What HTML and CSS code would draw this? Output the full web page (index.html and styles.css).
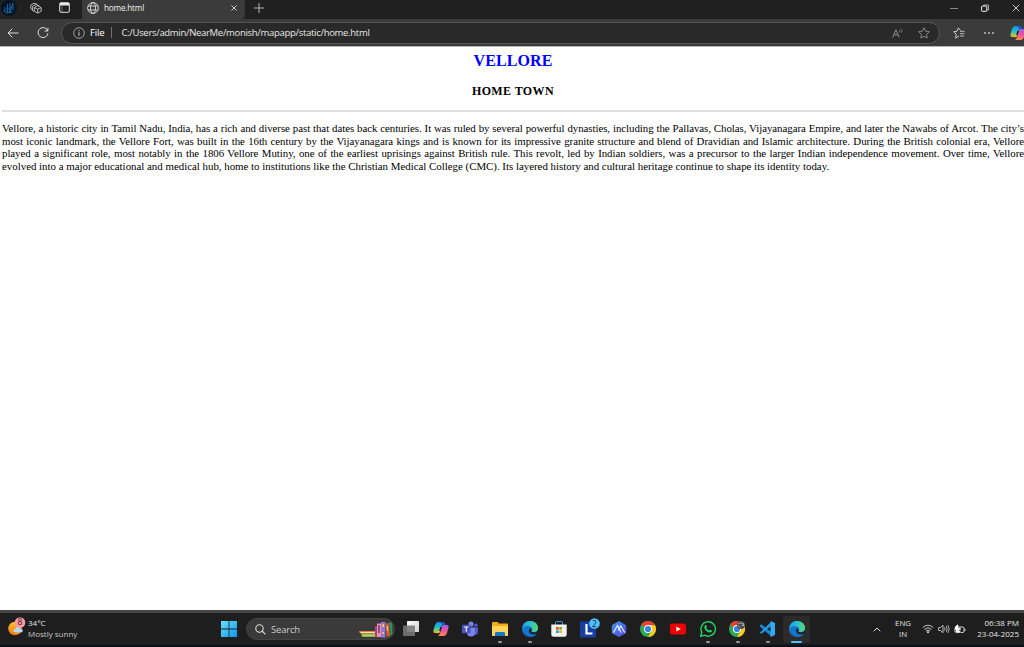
FILE: index.html
```html
<!DOCTYPE html>
<html lang="en">
<head>
<meta charset="utf-8">
<title>home.html</title>
<link rel="stylesheet" href="styles.css">
</head>
<body>
<svg class="defs" width="0" height="0" aria-hidden="true">
  <defs>
    <linearGradient id="gCopL" x1="0" y1="0" x2="0" y2="1"><stop offset="0" stop-color="#168be8"/><stop offset=".45" stop-color="#1fc0c8"/><stop offset="1" stop-color="#f2c21b"/></linearGradient>
    <linearGradient id="gCopR" x1="0" y1="0" x2="0" y2="1"><stop offset="0" stop-color="#9a60ee"/><stop offset=".5" stop-color="#ee4fa0"/><stop offset="1" stop-color="#ff8a4c"/></linearGradient>
    <linearGradient id="gEdge" x1="0" y1="0" x2="1" y2="0"><stop offset="0" stop-color="#1f9de4"/><stop offset=".55" stop-color="#2cc3cf"/><stop offset="1" stop-color="#5bdc61"/></linearGradient>
    <linearGradient id="gEdgeB" x1="0" y1="0" x2="1" y2="1"><stop offset="0" stop-color="#1a8fe0"/><stop offset="1" stop-color="#0a4fa5"/></linearGradient>
    <linearGradient id="gWin" x1="0" y1="0" x2="1" y2="1"><stop offset="0" stop-color="#6be0ff"/><stop offset="1" stop-color="#0f95ea"/></linearGradient>
    <linearGradient id="gSun" x1="0" y1="0" x2="0" y2="1"><stop offset="0" stop-color="#ffc12e"/><stop offset="1" stop-color="#f0780c"/></linearGradient>
    <linearGradient id="gHex" x1="0" y1="0" x2="1" y2="1"><stop offset="0" stop-color="#3c9af0"/><stop offset="1" stop-color="#5b41d6"/></linearGradient>
    <linearGradient id="gTask" x1="0" y1="0" x2="1" y2="1"><stop offset="0" stop-color="#fff"/><stop offset="1" stop-color="#cfcfcf"/></linearGradient>
    <symbol id="copilot" viewBox="0 0 16 16">
      <path d="M5 1h6Q10 1 9 4L7 11Q6 13 4 12H2Q0 12 .5 9L2 4Q3 1 5 1Z" fill="url(#gCopL)"/>
      <path d="M11 15H5Q6 15 7 12L9 5Q10 3 12 4h2Q16 4 15.500 7L14 12Q13 15 11 15Z" fill="url(#gCopR)"/>
      <path d="M6 1h5Q12 1 12.500 4H11Q9.500 4 9 5L8.500 7 9 3Q8 1 6 1Z" fill="#1756c9"/>
      <path d="M7.300 6h1.500L7.700 10H6.200Z" fill="#1e1e1e"/>
    </symbol>
    <symbol id="edge" viewBox="0 0 16 16">
      <circle cx="8" cy="8" r="8" fill="url(#gEdgeB)"/>
      <path d="M.1 7C1 2.500 4.300 0 8.200 0 12.800 0 16 3.200 16 6.900 16 9.500 14 11 12 11 10 11 9 10.300 9.500 9.500 10.300 8.300 10 5.800 7 5.200 4 4.600 1.300 5.400.1 7Z" fill="url(#gEdge)"/>
      <path d="M6.300 6.800C4.800 9.300 6 13 9.500 14 12 14.600 14 13.500 15 12 13 17 6.500 16.800 4 13 2.800 10.800 3.500 7.800 6.300 6.800Z" fill="#1479d0"/>
      <path d="M9.500 9.500C8.700 10.500 10 11.500 12 11.500 13.600 11.500 15 10.800 15.600 9.500L16 11 15 12.600C12 14 7.500 13 7 9.700 7 8.500 8 7.500 9.500 7.600 10 8.200 9.800 9 9.500 9.500Z" fill="#1e1e1e"/>
    </symbol>
    <symbol id="chrome" viewBox="0 0 16 16">
      <circle cx="8" cy="8" r="8" fill="#2da94f"/>
      <path d="M8 8 1.070 4A8 8 0 0 1 14.930 4Z" fill="#e8402f"/>
      <path d="M8 4h6.930A8 8 0 0 1 8 16L11.500 10Z" fill="#fdc820"/>
      <circle cx="8" cy="8" r="4" fill="#fff"/><circle cx="8" cy="8" r="3.100" fill="#397fea"/>
    </symbol>
  </defs>
</svg>

<div class="screen">
  <header class="tabstrip">
    <svg class="avatar" viewBox="0 0 16 16"><circle cx="8" cy="8" r="8" fill="#071426"/><path d="M4 7v5M6.500 4v9M9 6v6l3-9v7M2.500 10l3 3 6-1" fill="none" stroke="#12688f" stroke-width="1"/><path d="M9 12V3M5 9h5" stroke="#2b489a" fill="none"/></svg>
    <svg class="workspaces" viewBox="0 0 12 12"><path d="M2.700 8 .8 6.600V3.100L4 1.200 7 2.300M4 9.500 2.600 8.600V4.300L6 2.400 9.300 3.800M4.300 5.600 7.700 3.700 11.200 5.600V9.100L7.700 11.100 4.300 9.100ZM4.500 5.700 7.700 7.200 11 5.700M7.700 7.200V11" fill="none" stroke="#c8c8c8" stroke-width=".9"/></svg>
    <svg class="tabactions" viewBox="0 0 11 11"><rect x=".7" y=".7" width="9.600" height="9.600" rx="1.200" fill="none" stroke="#e0e0e0"/><path d="M1 1h9v2.500H1Z" fill="#e8e8e8"/><path d="M3 3v7" stroke="#8b8b8b" stroke-width=".7"/></svg>
    <div class="tab">
      <svg class="globe" viewBox="0 0 12 12"><g fill="none" stroke="#ddd" stroke-width=".9"><circle cx="6" cy="6" r="5.400"/><ellipse cx="6" cy="6" rx="2.500" ry="5.400"/><path d="M1 4h10M1 8h10"/></g></svg>
      <span class="tab-title">home.html</span>
      <svg class="tab-close" viewBox="0 0 6 6"><path d="m.4.4 5.200 5.200M5.600.4.4 5.600" stroke="#ddd" stroke-width=".9"/></svg>
    </div>
    <svg class="newtab" viewBox="0 0 10 10"><path d="M5 0v10M0 5h10" stroke="#c4c4c4" stroke-width=".9"/></svg>
    <div class="window-controls">
      <svg width="8" height="8"><path d="M0 4.500h8" stroke="#868686"/></svg>
      <svg width="8" height="8"><path d="M2.500 1.500V1h5v5H6" fill="none" stroke="#aaa"/><rect x=".6" y="2.100" width="5.200" height="5.200" rx=".6" fill="none" stroke="#eee"/></svg>
      <svg width="8" height="8"><path d="m.7.700 6.600 6.600M7.300.7.700 7.300" stroke="#ccc"/></svg>
    </div>
  </header>

  <nav class="toolbar">
    <svg class="back" viewBox="0 0 12 10"><path d="M11.500 5H1M5.300.7 1 5l4.300 4.300" fill="none" stroke="#ddd"/></svg>
    <svg class="reload" viewBox="0 0 12 12"><path d="M10.800 4A5 5 0 1 0 11 6.300M10.900.8V4H7.600" fill="none" stroke="#ddd"/></svg>
    <div class="address">
      <svg class="info" viewBox="0 0 12 12"><circle cx="6" cy="6" r="5.300" fill="none" stroke="#bbb" stroke-width=".8"/><path d="M6 5.200v3.600M6 3v1.200" stroke="#ccc"/></svg>
      <span class="scheme">File</span>
      <span class="divider"></span>
      <span class="url">C:/Users/admin/NearMe/monish/mapapp/static/home.html</span>
      <svg class="read" viewBox="0 0 12 10"><path d="M.7 9.500 3.900 1.800 7.200 9.500M1.900 6.800h4.100" fill="none" stroke="#999" stroke-width=".9"/><path d="M7.200 2.200q1 1 .2 2.200M8.800.8q2 2 .4 4" fill="none" stroke="#888" stroke-width=".8"/></svg>
      <svg class="star" viewBox="0 0 12 12"><path d="m6 .8 1.600 3.400 3.700.5-2.700 2.600.6 3.700L6 9.300 2.800 11l.6-3.700L.7 4.700l3.700-.5Z" fill="none" stroke="#909090" stroke-width=".9"/></svg>
    </div>
    <svg class="favorites" viewBox="0 0 12 12"><path d="M7.500 3.500 5.300.9 4 4.200.7 4.700l2.500 2.400L2.600 11 6 9" fill="none" stroke="#ccc"/><path d="M7 4.300h4.500M7 6.700h4.500M7 9h4" stroke="#bbb"/></svg>
    <svg class="more" viewBox="0 0 10 4"><g fill="#ccc"><circle cx="1" cy="2" r=".9"/><circle cx="5" cy="2" r=".9"/><circle cx="9" cy="2" r=".9"/></g></svg>
    <svg class="sidebar-copilot"><use href="#copilot"/></svg>
  </nav>

  <main class="page">
    <h1 class="city">VELLORE</h1>
    <h2 class="subtitle">HOME TOWN</h2>
    <hr class="rule">
    <p class="story">
      <span class="line">Vellore, a historic city in Tamil Nadu, India, has a rich and diverse past that dates back centuries. It was ruled by several powerful dynasties, including the Pallavas, Cholas, Vijayanagara Empire, and later the Nawabs of Arcot. The city’s</span>
      <span class="line">most iconic landmark, the Vellore Fort, was built in the 16th century by the Vijayanagara kings and is known for its impressive granite structure and blend of Dravidian and Islamic architecture. During the British colonial era, Vellore</span>
      <span class="line">played a significant role, most notably in the 1806 Vellore Mutiny, one of the earliest uprisings against British rule. This revolt, led by Indian soldiers, was a precursor to the larger Indian independence movement. Over time, Vellore</span>
      <span class="line last">evolved into a major educational and medical hub, home to institutions like the Christian Medical College (CMC). Its layered history and cultural heritage continue to shape its identity today.</span>
    </p>
  </main>

  <footer class="taskbar">
    <div class="weather">
      <svg class="weather-icon" viewBox="0 0 18 20"><circle cx="7" cy="11.500" r="6.800" fill="url(#gSun)"/><path d="M7.500 15.500q-2.500 0-2.300-2 .3-1.400 2-1.300.8-2.500 3-2 1.800.2 2.200 1.800 2.300-.3 2.400 1.600 0 1.900-2 1.900Z" fill="#b7d7f8"/><circle cx="12" cy="5.500" r="5.300" fill="#ff99a4"/><text class="badge-text" x="12" y="8.400">8</text></svg>
      <div class="weather-text"><span class="temp">34°C</span><span class="cond">Mostly sunny</span></div>
    </div>
    <svg class="start" viewBox="0 0 16 16"><path d="M0 0h7.600v7.600H0ZM8.400 0H16v7.600H8.400ZM0 8.400h7.600V16H0ZM8.400 8.400H16V16H8.400Z" fill="url(#gWin)"/></svg>
    <div class="search">
      <svg class="lens" viewBox="0 0 11 11"><circle cx="4.500" cy="4.500" r="3.700" fill="none" stroke="#ddd" stroke-width="1.100"/><path d="m7.200 7.200 3.200 3.200" stroke="#ddd" stroke-width="1.200"/></svg>
      <span class="search-label">Search</span>
      <svg class="books" viewBox="0 0 34 17"><path d="M0 10h16v2.500H2Q0 12 0 10Z" fill="#e8785b"/><path d="M1 11h15v1.300H2Z" fill="#f7dfa4"/><path d="M2 12.500h15V16H3Z" fill="#87ac3a"/><path d="M3 13.700h14v1H4Z" fill="#d9dc86"/><path d="M16 5h2v11h-2Z" fill="#a9427b"/><path d="M18 2.500h4V16h-4Z" fill="#f68cae"/><path d="M19.200 4h1.600v8h-1.600Z" fill="#7d3b77"/><path d="M22 1h4.300v15.500H22Z" fill="#9178df"/><path d="M23.200 3h1.800v3h-1.800ZM23.200 11H25v2h-1.800Z" fill="#f5b66a"/><path d="m26.300 2.500 3.400-.6L31 15l-3.500 1Z" fill="#d05b34"/><path d="m27.500 5 1.200-.2.700 5-1.200.2Z" fill="#f5c777"/><path d="M30 1.500q3-1 3.400 2v10l-2 1Z" fill="#2e8d61"/></svg>
    </div>
    <div class="apps">
      <span class="app"><svg viewBox="0 0 16 16"><rect x="4" y="0" width="12" height="11" rx=".8" fill="url(#gTask)"/><rect x="0" y="4.500" width="12" height="10.500" rx=".8" fill="#777" fill-opacity=".88"/></svg></span>
      <span class="app"><svg><use href="#copilot"/></svg></span>
      <span class="app"><svg viewBox="0 0 16 16"><circle cx="9" cy="3" r="2.600" fill="#7b83eb"/><circle cx="14" cy="4.200" r="1.700" fill="#5059c9"/><path d="M11 6.500h5v4.500q-.3 3-3 3h-2Z" fill="#5059c9"/><path d="M5 6.500h8V12q-.5 3.500-4 3.500T5 12Z" fill="#7b83eb"/><rect x="0" y="3.800" width="8.500" height="8.500" rx=".8" fill="#4b53bc"/><path d="M2.200 6h4.200M4.300 6v4.800" stroke="#fff" stroke-width="1.100"/></svg></span>
      <span class="app running"><svg viewBox="0 0 16 16"><path d="M0 2q0-1 1-1h4.500L7 2.600h8q1 0 1 1V14q0 1-1 1H1q-1 0-1-1Z" fill="#f3ac16"/><path d="M0 5h16v9q0 1-1 1H1q-1 0-1-1Z" fill="#ffd45a"/><path d="M3 15v-2.800q0-1.200 1.200-1.200h7.600q1.200 0 1.200 1.200V15Z" fill="#1477c6"/></svg></span>
      <span class="app running"><svg><use href="#edge"/></svg></span>
      <span class="app"><svg viewBox="0 0 16 16"><path d="M4.500 4V1.600q0-1 1-1h5q1 0 1 1V4" fill="none" stroke="#35a9e8"/><path d="M.3 3.400h15.400v10q0 2.400-2.200 2.400h-11Q.3 15.800.3 13.400Z" fill="#f2f2f2"/><path d="M5 6h2.700v2.700H5Z" fill="#ef5428"/><path d="M8.300 6H11v2.700H8.300Z" fill="#79b621"/><path d="M5 9.300h2.700V12H5Z" fill="#239fe6"/><path d="M8.300 9.300H11V12H8.300Z" fill="#f8b60c"/></svg></span>
      <span class="app"><svg class="l-app" viewBox="0 0 20 20"><path d="M0 3.500h16v16H0Z" fill="#173f9f"/><path d="M6.500 6v9.500h6" fill="none" stroke="#fff" stroke-width="2.200"/><circle cx="14.500" cy="5.500" r="5.300" fill="#4cc2ff"/><text class="badge-text" x="14.500" y="8.500">2</text></svg></span>
      <span class="app"><svg viewBox="0 0 16 16"><path d="m8 0 6.500 3.700q.7.400.7 1.200v6.300q0 .8-.7 1.200L8 16l-6.500-3.600q-.7-.4-.7-1.200V4.900q0-.8.7-1.200Z" fill="url(#gHex)"/><path d="m2.500 11.500 4-7 3.700 7M7 9.500 9.700 5l4 6.500" fill="none" stroke="#e4efff" stroke-width="1.200"/></svg></span>
      <span class="app"><svg><use href="#chrome"/></svg></span>
      <span class="app"><svg viewBox="0 0 16 16"><rect x="0" y="2.500" width="16" height="11" rx="2" fill="#f00000"/><path d="m6.300 5.500 4.600 2.500-4.600 2.500Z" fill="#fff"/></svg></span>
      <span class="app running"><svg viewBox="0 0 16 16"><path d="M.7 15.300 1.800 11.300A7.200 7.200 0 1 1 4.600 14.200Z" fill="#1e1e1e" stroke="#25d366" stroke-width="1.400"/><path d="M5.200 4.200q.8-.5 1.200.4l.5 1.200q-.2.800-.7 1.100 1.100 2 3 2.700l.9-.9 1.900.9q.2 1.500-1.600 1.900-2.500.3-4.800-2.300Q3.300 6 5.200 4.200Z" fill="#25d366"/></svg></span>
      <span class="app running"><svg viewBox="0 0 16 16"><use href="#chrome" width="16" height="16"/><circle cx="12" cy="4" r="4" fill="#4b4b4b"/><path d="M9 3q3-2.300 6 0l-2 1.500h2.500M9 4.500l2 2" fill="none" stroke="#b7b7b7" stroke-width=".9"/></svg></span>
      <span class="app running"><svg viewBox="0 0 16 16"><path d="m1 4.300 1.500-1L12 11v4L1 5.700Z" fill="#1688d6"/><path d="M1 11.500 12 1v4L2.500 12.700 1 12Z" fill="#2297e8"/><path d="m11.500 0 4.500 2v12l-4.500 2Z" fill="#35a9f3"/></svg></span>
      <span class="app active"><svg><use href="#edge"/></svg></span>
    </div>
    <div class="tray">
      <svg class="chevron" viewBox="0 0 8 5"><path d="M.7 4.300 4 1l3.300 3.300" fill="none" stroke="#ddd"/></svg>
      <div class="language"><span>ENG</span><span>IN</span></div>
      <svg class="wifi" viewBox="0 0 12 10"><g fill="none" stroke="#d4d4d4" stroke-width=".9"><path d="M.7 3.500Q6-1 11.300 3.500M2.400 5.300q3.600-3 7.200 0M4 7q2-1.600 4 0"/></g><circle cx="6" cy="8.300" r="1" fill="#e4e4e4"/></svg>
      <svg class="volume" viewBox="0 0 12 10"><path d="M.6 3.500h1.900L5 1.300v7.400L2.500 6.500H.6Z" fill="none" stroke="#ccc" stroke-width=".9"/><path d="M6.500 3.300q1.200 1.700 0 3.400M8.200 2q2 3 0 6M9.900 1q2.700 4 0 8" fill="none" stroke="#ccc" stroke-width=".8"/></svg>
      <svg class="battery" viewBox="0 0 12 10"><rect x="1" y="3" width="9" height="5.500" rx="1.300" fill="none" stroke="#ddd"/><path d="M2 4h5v4H2Z" fill="#eee"/><path d="M11 4.800v2" stroke="#ddd"/><path d="M3.500.2q-3 2.300-2.700 5 2 .8 3.600-.8Q5.300 2.500 3.500.2Z" fill="#fff"/><path d="m7.500 4-2 2.500H7L6 9" fill="none" stroke="#222" stroke-width=".7"/></svg>
      <div class="clock"><span>06:38 PM</span><span>23-04-2025</span></div>
    </div>
  </footer>
</div>
</body>
</html>
```

FILE: styles.css
```css
* { box-sizing: border-box; }
body { margin: 0; background: #fff; overflow: hidden; font-family: "Open Sans", "Noto Sans", sans-serif; }
.defs { position: absolute; }
svg { display: block; flex: none; }
.screen { width: 1024px; height: 647px; display: grid; grid-template-rows: 19px 28px 563px 37px; }

.tabstrip { display: flex; align-items: center; background: #202020; padding-bottom: 4px; overflow: hidden; }
.avatar { width: 16px; height: 16px; margin-left: 1px; }
.workspaces { width: 12px; height: 12px; margin-left: 13px; }
.tabactions { width: 11px; height: 11px; margin-left: 17px; }
.tab { align-self: flex-start; height: 19px; width: 163px; margin-left: 12px; padding: 0 8px 4px 5px; display: flex; align-items: center; flex: none; background: #3b3b3b; border-radius: 0 0 4px 0; }
.globe { width: 12px; height: 12px; }
.tab-title { margin: 0 0 0 5px; font-size: 8.2px; line-height: 12px; letter-spacing: -.2px; color: #f0f0f0; }
.tab-close { width: 6px; height: 6px; margin-left: auto; }
.newtab { width: 10px; height: 10px; margin-left: 9px; }
.window-controls { display: flex; gap: 23px; margin-left: auto; margin-right: 4px; }

.toolbar { display: flex; align-items: center; background: #3b3b3b; border-bottom: 1px solid #b4b4b4; overflow: hidden; }
.back { width: 12px; height: 10px; margin-left: 7px; }
.reload { width: 12px; height: 12px; margin-left: 18px; }
.address { width: 879px; height: 22px; margin-left: 12px; padding: 0 9px 0 11px; display: flex; align-items: center; flex: none; background: #292929; border: 1px solid #555; border-radius: 11px; font-size: 9.5px; line-height: 14px; color: #e7e7e7; }
.info { width: 12px; height: 12px; }
.scheme { margin-left: 5px; letter-spacing: -.15px; color: #fff; }
.divider { width: 1px; height: 11px; margin: 0 9px 0 7px; background: #707070; }
.url { white-space: nowrap; letter-spacing: -.3px; }
.read { width: 12px; height: 10px; margin-left: auto; }
.star { width: 12px; height: 12px; margin-left: 14px; }
.favorites { width: 12px; height: 12px; margin-left: 13px; }
.more { width: 10px; height: 4px; margin-left: 19px; }
.sidebar-copilot { width: 16px; height: 16px; margin-left: 16px; }

.page { background: #fff; padding: 5px 0 0 2px; font-family: "Liberation Serif", serif; color: #000; }
.city { margin: 0; font-size: 16px; line-height: 18px; letter-spacing: .1px; text-align: center; color: #00f; }
.subtitle { margin: 14px 0 0; font-size: 12px; line-height: 14px; letter-spacing: .4px; text-align: center; }
.rule { height: 2px; margin: 12px 0 0; border: 0; background: #e0e0e0; }
.story { margin: 10px 0 0; font-size: 10.86px; line-height: 12.6px; }
.line { display: block; white-space: nowrap; text-align: justify; text-align-last: justify; letter-spacing: -.05px; }
.last { text-align-last: left; letter-spacing: 0; }

.taskbar { display: flex; align-items: center; background: #1e1e1e; border-top: 3px solid #454545; border-bottom: 2px solid #0b1016; color: #e4e4e4; font-size: 8px; line-height: 11px; }
.weather { width: 221px; display: flex; align-items: center; flex: none; padding-left: 8px; }
.weather-icon { width: 18px; height: 20px; margin-top: -4px; }
.badge-text { font: 8.5px "Open Sans", sans-serif; text-anchor: middle; fill: #29252b; }
.weather-text { display: grid; margin: -3px 0 0 2px; }
.cond { color: #c6c6c6; }
.start { width: 16px; height: 16px; }
.search { width: 149px; height: 22px; margin-left: 9px; padding: 0 1px 0 8px; display: flex; align-items: center; flex: none; border-radius: 11px; background: #3a3a3a; border: 1px solid #444; }
.lens { width: 11px; height: 11px; }
.search-label { margin-left: 5px; font-size: 9.5px; letter-spacing: -.2px; color: #ccc; }
.books { width: 34px; height: 17px; margin: 1px 0 0 auto; }
.apps { display: grid; grid-template-columns: repeat(14, 29.700px); margin-left: 1px; }
.app { position: relative; width: 27px; height: 27px; margin-left: 1.350px; display: grid; place-items: center; border-radius: 3px; }
.app svg { width: 16px; height: 16px; }
.app .l-app { width: 20px; height: 20px; margin: -3px 0 0 3px; }
.running::after, .active::after { content: ""; position: absolute; bottom: 0; left: 12px; width: 4px; height: 2px; border-radius: 1px; background: #999; }
.active { background: #2b2b2b; }
.active::after { left: 8px; width: 11px; background: #4cc2ff; }
.tray { display: flex; align-items: center; margin-left: auto; margin-right: 5px; }
.chevron { width: 8px; height: 5px; }
.language { display: grid; width: 18px; margin: -1px 0 0 13px; text-align: center; font-size: 7.800px; }
.wifi { width: 12px; height: 10px; margin-left: 10px; }
.volume { width: 12px; height: 10px; margin-left: 4px; }
.battery { width: 12px; height: 10px; margin-left: 4px; }
.clock { display: grid; width: 45px; margin: -3px 0 0 8px; text-align: right; justify-content: end; white-space: nowrap; }
```
